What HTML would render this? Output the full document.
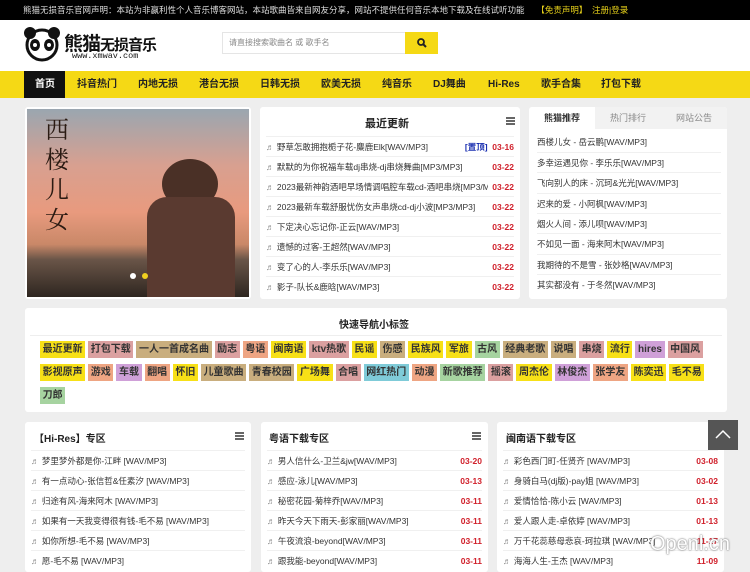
<!DOCTYPE html>
<html><head><meta charset="utf-8"><style>
*{margin:0;padding:0;box-sizing:border-box}
body{width:750px;height:562px;overflow:hidden;background:#eee;font-family:"Liberation Sans","Noto Sans CJK SC",sans-serif;position:relative;font-size:9px;color:#333}
.abs{position:absolute}
.top{left:0;top:0;width:750px;height:20px;background:#000;color:#ddd;font-size:8.5px;line-height:20px;padding-left:23px;white-space:nowrap}
.top .y{color:#e8d21a}
.hdr{left:0;top:20px;width:750px;height:51px;background:#fff}
.nav{left:0;top:71px;width:750px;height:27px;background:#f5d915}
.nav span{position:absolute;top:0;line-height:27px;font-size:10px;font-weight:bold;color:#222}
.panel{background:#fff;border-radius:3px}
.row{position:absolute;left:6px;right:6px;height:20px;line-height:20px;border-top:1px solid #f0f0f0;white-space:nowrap;overflow:hidden;font-size:8.5px}
.row .d{position:absolute;right:0;top:0;color:#d0202b;font-weight:bold}
.n{color:#888}
.tags{position:absolute;left:40px;width:685px;display:flex;column-gap:3px}
.tags b{display:block;height:17px;line-height:17px;font-size:10px;padding:0 2.6px;color:#333;white-space:nowrap}
.Y{background:#f7e017}.P{background:#dba0a0}.T{background:#c9ae7e}.S{background:#eea583}.G{background:#a6d3a0}.U{background:#cfa0d8}.C{background:#7fcbd8}
.ttl{position:absolute;font-size:10px;font-weight:bold;color:#222}
.ico{position:absolute;width:9px;height:8px;border-top:2px solid #666;border-bottom:2px solid #666}
.ico:after{content:"";position:absolute;left:0;right:0;top:1px;height:2px;background:#666}
</style></head><body>
<div class="abs top">熊猫无损音乐官网声明：本站为非赢利性个人音乐博客网站，本站歌曲皆来自网友分享，网站不提供任何音乐本地下载及在线试听功能 &nbsp;&nbsp;&nbsp;&nbsp;<span class="y">【免责声明】 &nbsp;注册|登录</span></div>
<div class="abs hdr">
 <svg class="abs" style="left:22px;top:6px" width="40" height="36"><circle cx="20" cy="19" r="15" fill="#fff" stroke="#111" stroke-width="3"/><circle cx="8" cy="7" r="6" fill="#111"/><circle cx="32" cy="7" r="6" fill="#111"/><ellipse cx="13" cy="19" rx="5" ry="6" fill="#111"/><ellipse cx="27" cy="19" rx="5" ry="6" fill="#111"/><circle cx="13" cy="19" r="2" fill="#fff"/><circle cx="27" cy="19" r="2" fill="#fff"/></svg>
 <div class="abs" style="left:64px;top:9px;font-size:19px;font-weight:bold;color:#111;letter-spacing:-1px">熊猫<span style="font-size:15px">无损音乐</span></div>
 <div class="abs" style="left:72px;top:31px;font-family:'Liberation Mono',monospace;font-size:8.5px;color:#111">www.xmwav.com</div>
 <div class="abs" style="left:222px;top:12px;width:184px;height:22px;border:1px solid #e5e5e5;font-size:8px;color:#888;line-height:20px;padding-left:6px">请直接搜索歌曲名 或 歌手名</div>
 <div class="abs" style="left:405px;top:12px;width:33px;height:22px;background:#f5d915"><svg style="position:absolute;left:12px;top:6px" width="10" height="10"><circle cx="4" cy="4" r="3" fill="none" stroke="#222" stroke-width="1.8"/><path d="M6 6 L9 9" stroke="#222" stroke-width="2"/></svg></div>
</div>
<div class="abs nav">
 <div style="position:absolute;left:24px;top:0;width:41px;height:27px;background:#111"></div>
 <span style="left:35px;color:#fff">首页</span><span style="left:77px">抖音热门</span><span style="left:138px">内地无损</span><span style="left:199px">港台无损</span><span style="left:260px">日韩无损</span><span style="left:321px">欧美无损</span><span style="left:382px">纯音乐</span><span style="left:433px">DJ舞曲</span><span style="left:488px">Hi-Res</span><span style="left:541px">歌手合集</span><span style="left:601px">打包下载</span>
</div>
<div class="abs panel" style="left:25px;top:107px;width:226px;height:192px;padding:2px">
 <div style="position:relative;width:222px;height:188px;background:linear-gradient(180deg,#9aa6b0 0%,#d8a090 30%,#e89a7e 55%,#c98868 72%,#6a5548 80%,#2e2620 100%);overflow:hidden">
  <div style="position:absolute;left:18px;top:4px;font-family:'Noto Serif CJK SC',serif;font-size:24px;line-height:30px;width:30px;color:#2a1a12">西楼儿女</div>
  <div style="position:absolute;left:135px;top:50px;width:56px;height:50px;border-radius:50%;background:#4a3026"></div>
  <div style="position:absolute;left:120px;top:88px;width:88px;height:110px;border-radius:20px 20px 0 0;background:#5a3a30"></div>
  <div style="position:absolute;left:103px;top:164px;width:6px;height:6px;border-radius:50%;background:#fff"></div>
  <div style="position:absolute;left:115px;top:164px;width:6px;height:6px;border-radius:50%;background:#f0d020"></div>
 </div>
</div>
<div class="abs panel" style="left:260px;top:107px;width:260px;height:192px">
 <div class="ttl" style="left:105px;top:8px;font-size:11px">最近更新</div>
 <div class="ico" style="left:246px;top:10px"></div>
 <div class="row" style="top:29px"><span class="n">♬</span> 野草怎敢拥抱栀子花-麋鹿Elk[WAV/MP3]<span class="d"><span style="color:#1a2fb0">[置顶]</span> &nbsp;03-16</span></div>
 <div class="row" style="top:49px"><span class="n">♬</span> 默默的为你祝福车载dj串烧-dj串烧舞曲[MP3/MP3]<span class="d">03-22</span></div>
 <div class="row" style="top:69px"><span class="n">♬</span> 2023最新神韵酒吧早场情调唱腔车载cd-酒吧串烧[MP3/MP<span class="d" style="background:#fff;padding-left:4px">03-22</span></div>
 <div class="row" style="top:89px"><span class="n">♬</span> 2023最新车载舒服忧伤女声串烧cd-dj小波[MP3/MP3]<span class="d">03-22</span></div>
 <div class="row" style="top:109px"><span class="n">♬</span> 下定决心忘记你-正云[WAV/MP3]<span class="d">03-22</span></div>
 <div class="row" style="top:129px"><span class="n">♬</span> 遗憾的过客-王超然[WAV/MP3]<span class="d">03-22</span></div>
 <div class="row" style="top:149px"><span class="n">♬</span> 变了心的人-李乐乐[WAV/MP3]<span class="d">03-22</span></div>
 <div class="row" style="top:169px"><span class="n">♬</span> 影子-队长&amp;鹿晗[WAV/MP3]<span class="d">03-22</span></div>
</div>
<div class="abs panel" style="left:529px;top:107px;width:198px;height:192px;overflow:hidden">
 <div style="position:absolute;left:0;top:0;width:198px;height:22px;background:#f2f2f2"></div>
 <div style="position:absolute;left:0;top:0;width:66px;height:22px;background:#fff;text-align:center;line-height:22px;font-weight:bold;font-size:9px">熊猫推荐</div>
 <div style="position:absolute;left:66px;top:0;width:66px;text-align:center;line-height:22px;color:#888">热门排行</div>
 <div style="position:absolute;left:132px;top:0;width:66px;text-align:center;line-height:22px;color:#888">网站公告</div>
 <div class="row" style="top:25px;left:8px;border:0">西楼儿女 - 岳云鹏[WAV/MP3]</div>
 <div class="row" style="top:45px;left:8px">多幸运遇见你 - 李乐乐[WAV/MP3]</div>
 <div class="row" style="top:65px;left:8px">飞向别人的床 - 沉珂&amp;光光[WAV/MP3]</div>
 <div class="row" style="top:86px;left:8px">迟来的爱 - 小阿枫[WAV/MP3]</div>
 <div class="row" style="top:106px;left:8px">烟火人间 - 添儿呗[WAV/MP3]</div>
 <div class="row" style="top:126px;left:8px">不如见一面 - 海来阿木[WAV/MP3]</div>
 <div class="row" style="top:147px;left:8px">我期待的不是雪 - 张妙格[WAV/MP3]</div>
 <div class="row" style="top:167px;left:8px">其实都没有 - 于冬然[WAV/MP3]</div>
</div>
<div class="abs panel" style="left:25px;top:308px;width:702px;height:104px">
 <div class="ttl" style="left:314px;top:8px">快速导航小标签</div>
 <div style="position:absolute;left:5px;right:5px;top:27px;border-top:1px solid #eee"></div>
</div>
<div class="tags" style="top:341px">
<b class="Y">最近更新</b><b class="P">打包下载</b><b class="T">一人一首成名曲</b><b class="P">励志</b><b class="S">粤语</b><b class="Y">闽南语</b><b class="P">ktv热歌</b><b class="Y">民谣</b><b class="T">伤感</b><b class="Y">民族风</b><b class="Y">军旅</b><b class="G">古风</b><b class="T">经典老歌</b><b class="T">说唱</b><b class="P">串烧</b><b class="Y">流行</b><b class="U">hires</b><b class="P">中国风</b></div>
<div class="tags" style="top:364px">
<b class="Y">影视原声</b><b class="S">游戏</b><b class="U">车载</b><b class="S">翻唱</b><b class="Y">怀旧</b><b class="T">儿童歌曲</b><b class="T">青春校园</b><b class="Y">广场舞</b><b class="P">合唱</b><b class="C">网红热门</b><b class="S">动漫</b><b class="G">新歌推荐</b><b class="P">摇滚</b><b class="Y">周杰伦</b><b class="U">林俊杰</b><b class="S">张学友</b><b class="Y">陈奕迅</b><b class="Y">毛不易</b></div>
<div class="tags" style="top:387px"><b class="G">刀郎</b></div>
<div class="abs panel" style="left:25px;top:422px;width:226px;height:150px">
 <div class="ttl" style="left:9px;top:8px">【Hi-Res】专区</div><div class="ico" style="left:210px;top:10px"></div>
 <div class="row" style="top:28px"><span class="n">♬</span> 梦里梦外都是你-江畔 [WAV/MP3]</div>
 <div class="row" style="top:48px"><span class="n">♬</span> 有一点动心-张信哲&amp;任素汐 [WAV/MP3]</div>
 <div class="row" style="top:68px"><span class="n">♬</span> 归途有风-海来阿木 [WAV/MP3]</div>
 <div class="row" style="top:88px"><span class="n">♬</span> 如果有一天我变得很有钱-毛不易 [WAV/MP3]</div>
 <div class="row" style="top:108px"><span class="n">♬</span> 如你所想-毛不易 [WAV/MP3]</div>
 <div class="row" style="top:128px"><span class="n">♬</span> 愿-毛不易 [WAV/MP3]</div>
</div>
<div class="abs panel" style="left:261px;top:422px;width:227px;height:150px">
 <div class="ttl" style="left:8px;top:8px">粤语下载专区</div><div class="ico" style="left:211px;top:10px"></div>
 <div class="row" style="top:28px"><span class="n">♬</span> 男人信什么-卫兰&amp;jw[WAV/MP3]<span class="d">03-20</span></div>
 <div class="row" style="top:48px"><span class="n">♬</span> 感应-泳儿[WAV/MP3]<span class="d">03-13</span></div>
 <div class="row" style="top:68px"><span class="n">♬</span> 秘密花园-菊梓乔[WAV/MP3]<span class="d">03-11</span></div>
 <div class="row" style="top:88px"><span class="n">♬</span> 昨天今天下雨天-彭家丽[WAV/MP3]<span class="d">03-11</span></div>
 <div class="row" style="top:108px"><span class="n">♬</span> 午夜流浪-beyond[WAV/MP3]<span class="d">03-11</span></div>
 <div class="row" style="top:128px"><span class="n">♬</span> 跟我能-beyond[WAV/MP3]<span class="d">03-11</span></div>
</div>
<div class="abs panel" style="left:497px;top:422px;width:227px;height:150px">
 <div class="ttl" style="left:9px;top:8px">闽南语下载专区</div>
 <div class="row" style="top:28px"><span class="n">♬</span> 彩色西门町-任贤齐 [WAV/MP3]<span class="d">03-08</span></div>
 <div class="row" style="top:48px"><span class="n">♬</span> 身骑白马(dj版)-pay姐 [WAV/MP3]<span class="d">03-02</span></div>
 <div class="row" style="top:68px"><span class="n">♬</span> 爱情恰恰-陈小云 [WAV/MP3]<span class="d">01-13</span></div>
 <div class="row" style="top:88px"><span class="n">♬</span> 爱人跟人走-卓依婷 [WAV/MP3]<span class="d">01-13</span></div>
 <div class="row" style="top:108px"><span class="n">♬</span> 万千花蕊慈母悲哀-珂拉琪 [WAV/MP3]<span class="d">11-17</span></div>
 <div class="row" style="top:128px"><span class="n">♬</span> 海海人生-王杰 [WAV/MP3]<span class="d">11-09</span></div>
</div>
<div class="abs" style="left:708px;top:420px;width:30px;height:30px;background:#555"><svg style="position:absolute;left:7px;top:9px" width="16" height="10"><path d="M1 9 L8 2 L15 9" fill="none" stroke="#fff" stroke-width="1.5"/></svg></div>
<div class="abs" style="left:650px;top:533px;font-size:20px;color:#fff;text-shadow:0 0 2px #888,0 0 1px #666">Openl.cn</div>
</body></html>
